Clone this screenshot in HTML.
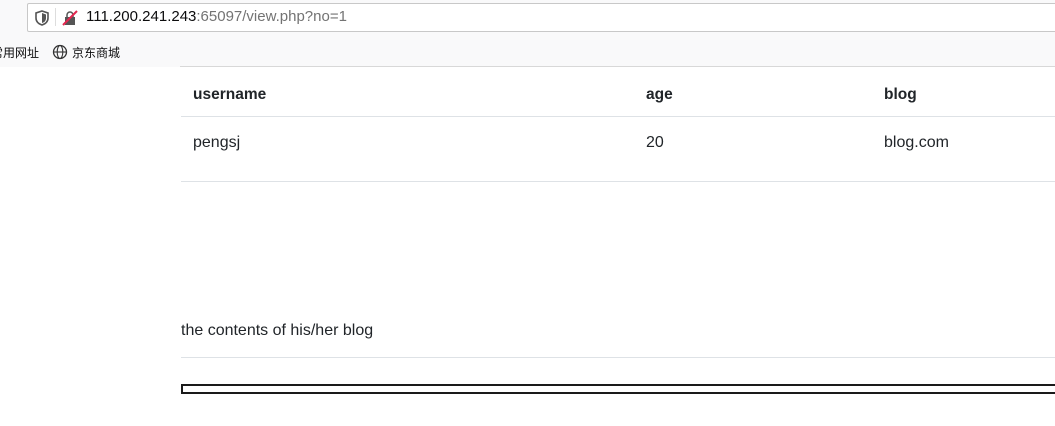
<!DOCTYPE html>
<html><head><style>
body{margin:0;width:1055px;height:426px;overflow:hidden;background:#fff;font-family:"Liberation Sans","Noto Sans CJK SC",sans-serif;position:relative}
.tb{position:absolute;left:0;top:0;width:1055px;height:67px;background:#f9f9fa}
.url{position:absolute;left:27px;top:3px;width:1040px;height:29px;background:#fff;border:1px solid #c8c8c8;border-radius:2px;box-sizing:border-box}
.sep{position:absolute;left:55px;top:8px;width:1px;height:18px;background:#ddd}
.utext{position:absolute;left:86px;top:8px;font-size:15px;color:#0c0c0d}
.utext span{color:#737373}
.bm{position:absolute;top:44px;font-size:12px;color:#0c0c0d}
.line{position:absolute;left:180px;top:66px;width:875px;height:1px;background:#d8d8d8}
.t{position:absolute;font-size:16px;color:#212529}
.b{font-weight:bold;font-size:15.5px}
.hr{position:absolute;left:181px;width:874px;height:1px;background:#dee2e6}
</style></head><body>
<div class="tb"></div>
<div class="url">
<svg style="position:absolute;left:7px;top:6px" width="14" height="16" viewBox="0 0 14 16"><path d="M7 1 L13 3 V8 C13 12 10 14 7 15 C4 14 1 12 1 8 V3 Z" fill="none" stroke="#555" stroke-width="1.6"/><path d="M7 3 L11 4.5 V8 C11 11 9 12.5 7 13 Z" fill="#555"/></svg>
<svg style="position:absolute;left:34px;top:6px" width="16" height="16" viewBox="0 0 16 16"><rect x="3" y="7" width="10" height="8" fill="#555"/><path d="M5 7 V5 a3 3 0 0 1 6 0 V7" fill="none" stroke="#555" stroke-width="1.5"/><line x1="1" y1="15" x2="15" y2="1" stroke="#e22850" stroke-width="2"/></svg>
</div>
<div class="sep" style="left:55px"></div>
<div class="utext">111.200.241.243<span>:65097/view.php?no=1</span></div>
<div class="bm" style="left:-9px">常用网址</div>
<svg style="position:absolute;left:52px;top:44px" width="16" height="16" viewBox="0 0 16 16"><circle cx="8" cy="8" r="6.5" fill="none" stroke="#333" stroke-width="1.3"/><ellipse cx="8" cy="8" rx="2.8" ry="6.5" fill="none" stroke="#333" stroke-width="1.1"/><line x1="1.5" y1="8" x2="14.5" y2="8" stroke="#333" stroke-width="1.1"/></svg>
<div class="bm" style="left:72px">京东商城</div>
<div class="line"></div>
<div class="t b" style="left:193px;top:86px">username</div>
<div class="t b" style="left:646px;top:86px">age</div>
<div class="t b" style="left:884px;top:86px">blog</div>
<div class="hr" style="top:116px"></div>
<div class="t" style="left:193px;top:134px">pengsj</div>
<div class="t" style="left:646px;top:134px">20</div>
<div class="t" style="left:884px;top:134px">blog.com</div>
<div class="hr" style="top:181px"></div>
<div class="t" style="left:181px;top:322px">the contents of his/her blog</div>
<div class="hr" style="top:357px"></div>
<div style="position:absolute;left:181px;top:384px;width:880px;height:10px;border:2px solid #1a1a1a;box-sizing:border-box"></div>
</body></html>
